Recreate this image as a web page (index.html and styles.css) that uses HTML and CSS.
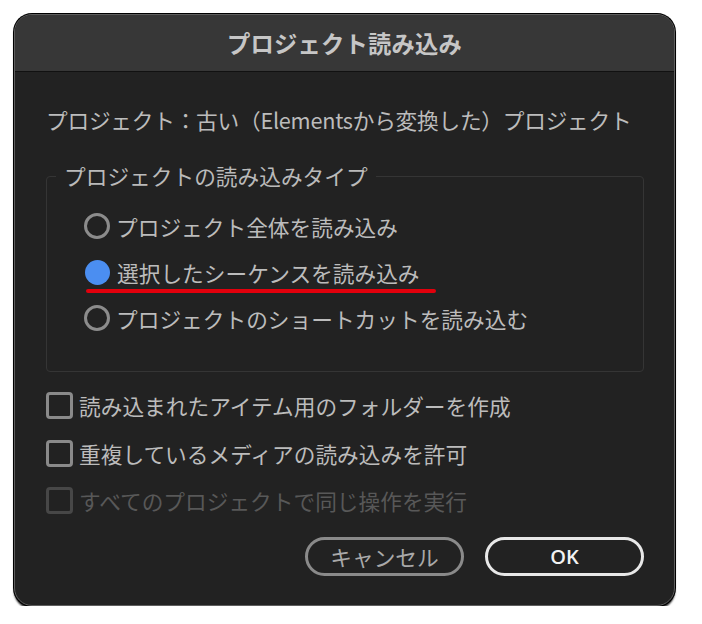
FILE: index.html
```html
<!DOCTYPE html>
<html lang="ja">
<head>
<meta charset="utf-8">
<title>プロジェクト読み込み</title>
<link rel="stylesheet" href="styles.css">
</head>
<body>
<div class="window">
  <div class="titlebar">プロジェクト読み込み</div>
  <div class="content">
    <p class="info">プロジェクト：古い（Elementsから変換した）プロジェクト</p>
    <fieldset class="group">
      <legend class="legend">プロジェクトの読み込みタイプ</legend>
      <div class="radio-row"><span class="radio"></span><span class="label">プロジェクト全体を読み込み</span></div>
      <div class="radio-row marked"><span class="radio checked"></span><span class="label">選択したシーケンスを読み込み</span></div>
      <div class="radio-row"><span class="radio"></span><span class="label">プロジェクトのショートカットを読み込む</span></div>
    </fieldset>
    <div class="checks">
      <div class="check-row"><span class="box"></span><span class="label">読み込まれたアイテム用のフォルダーを作成</span></div>
      <div class="check-row"><span class="box"></span><span class="label">重複しているメディアの読み込みを許可</span></div>
      <div class="check-row disabled"><span class="box"></span><span class="label">すべてのプロジェクトで同じ操作を実行</span></div>
    </div>
    <div class="buttons">
      <div class="btn cancel">キャンセル</div>
      <div class="btn ok">OK</div>
    </div>
  </div>
</div>
</body>
</html>
```

FILE: styles.css
```css
html, body {
  margin: 0;
  padding: 0;
  background: #ffffff;
}
body {
  font-family: "Noto Sans CJK JP", "Noto Sans", sans-serif;
  padding: 14px 0 0 14px;
}
.window {
  width: 659px;
  height: 590px;
  border: 1px solid #5e5e5e;
  border-radius: 18px;
  background: #222222;
  box-shadow: 0 0 0 1px #000, 0 3px 2px 0 rgba(0,0,0,0.85);
  overflow: hidden;
  display: flex;
  flex-direction: column;
}
.titlebar {
  height: 56px;
  flex: none;
  background: #373737;
  border-bottom: 1px solid #111;
  color: #c6c6c6;
  font-weight: bold;
  font-size: 23.3px;
  line-height: 56px;
  text-align: center;
  letter-spacing: 0.2px;
}
.content {
  padding: 0 30px 0 31px;
  color: #bcbcbc;
  font-size: 21.7px;
}
.info {
  margin: 33px 0 0 0;
  line-height: 30px;
  height: 30px;
  white-space: nowrap;
  letter-spacing: -0.25px;
}
.group {
  margin: 26px 0 0 0;
  padding: 12px 0 30px 0;
  border: 1px solid #353535;
  border-radius: 4px;
  min-width: 0;
  width: 598px;
  box-sizing: border-box;
}
.legend {
  margin-left: 9px;
  padding: 0 8px;
  line-height: 30px;
  color: #bababa;
}
.radio-row {
  height: 46px;
  margin-left: 37px;
  display: flex;
  align-items: center;
  gap: 6px;
  position: relative;
  white-space: nowrap;
}
.radio {
  width: 26px;
  height: 26px;
  box-sizing: border-box;
  border: 3px solid #8c8c8c;
  border-radius: 50%;
  flex: none;
}
.radio.checked {
  border: none;
  background: #4b8ef1;
  width: 25px;
  height: 25px;
  margin: 0 1px 0 1px;
}
.marked::after {
  content: "";
  position: absolute;
  left: 2px;
  top: 40px;
  width: 350px;
  height: 4px;
  border-radius: 2px;
  background: #e2000c;
}
.checks {
  margin-top: 10px;
}
.check-row {
  height: 47.6px;
  display: flex;
  align-items: center;
  gap: 6px;
  white-space: nowrap;
}
.box {
  width: 27px;
  height: 27px;
  box-sizing: border-box;
  border: 3px solid #8a8a8a;
  border-radius: 4px;
  flex: none;
}
.disabled .box {
  border-color: #474747;
}
.disabled .label {
  color: #585858;
}
.buttons {
  margin-top: 12px;
  display: flex;
  justify-content: flex-end;
  gap: 21px;
}
.btn {
  width: 159px;
  height: 39px;
  box-sizing: border-box;
  border-radius: 20px;
  border: 3px solid #8a8a8a;
  display: flex;
  align-items: center;
  justify-content: center;
  font-size: 21.7px;
}
.cancel {
  color: #a9a9a9;
}
.ok {
  border-color: #e8e8e8;
  color: #f2f2f2;
  font-weight: 600;
  font-family: "Open Sans", "Noto Sans", sans-serif;
  font-size: 20px;
}
```
